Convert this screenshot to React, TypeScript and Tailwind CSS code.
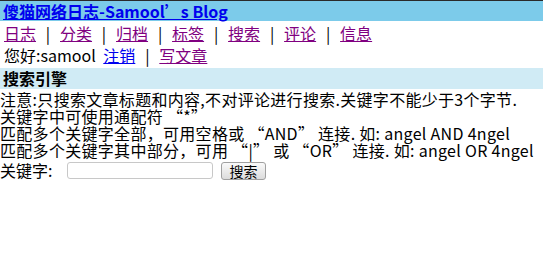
const NAV = ["日志", "分类", "归档", "标签", "搜索", "评论", "信息"];

function Sep() {
  return <span className="inline-block w-[24px] text-center text-black">|</span>;
}

export default function App() {
  return (
    <div className="w-[543px] h-[261px] bg-white text-black text-[16px] font-['Noto_Sans_CJK_SC',sans-serif] overflow-hidden">
      {/* header bar */}
      <div className="h-[21px] border-t border-[#2a2a2a] bg-[#7ccbea] pl-[3px] leading-[20px]">
        <a href="#" className="font-bold text-[#0000ee] underline underline-offset-[1px]">
          傻猫网络日志-Samool&#8217;s Blog
        </a>
      </div>

      {/* nav */}
      <div className="h-[23px] pl-[4px] pt-[2px] leading-[20px] text-[#800080]">
        {NAV.map((n, i) => (
          <span key={n}>
            {i > 0 && <Sep />}
            <a href="#" className="underline underline-offset-[1px]">{n}</a>
          </span>
        ))}
      </div>

      {/* user */}
      <div className="h-[24px] pl-[4px] pt-[1px] leading-[20px]">
        您好:samool{" "}
        <a href="#" className="ml-[4px] text-[#0000ee] underline underline-offset-[1px]">注销</a>
        <Sep />
        <a href="#" className="text-[#800080] underline underline-offset-[1px]">写文章</a>
      </div>

      {/* section */}
      <div className="h-[21px] bg-[#d0ebf5] pl-[3px] font-bold leading-[21px]">搜索引擎</div>

      <div className="pt-[2px] leading-[17px] tracking-[0.3px]">
        <div>注意:只搜索文章标题和内容,不对评论进行搜索.关键字不能少于3个字节.</div>
        <div>关键字中可使用通配符 &#8220;*&#8221;</div>
        <div>匹配多个关键字全部，可用空格或 &#8220;AND&#8221; 连接. 如: angel AND 4ngel</div>
        <div>匹配多个关键字其中部分，可用 &#8220;|&#8221; 或 &#8220;OR&#8221; 连接. 如: angel OR 4ngel</div>
      </div>

      <div className="mt-[2px] flex items-center h-[19px]">
        <span className="w-[67px] shrink-0 leading-[19px]">关键字:</span>
        <input
          type="text"
          className="w-[146px] h-[17px] shrink-0 border border-[#c8c8c8] rounded-[3px] bg-white outline-none"
        />
        <button className="ml-[8px] w-[45px] h-[18px] shrink-0 border border-[#a0a0a0] rounded-[3px] bg-gradient-to-b from-[#fafafa] to-[#dcdcdc] text-[14px] leading-[14px] text-black">
          搜索
        </button>
      </div>
    </div>
  );
}
